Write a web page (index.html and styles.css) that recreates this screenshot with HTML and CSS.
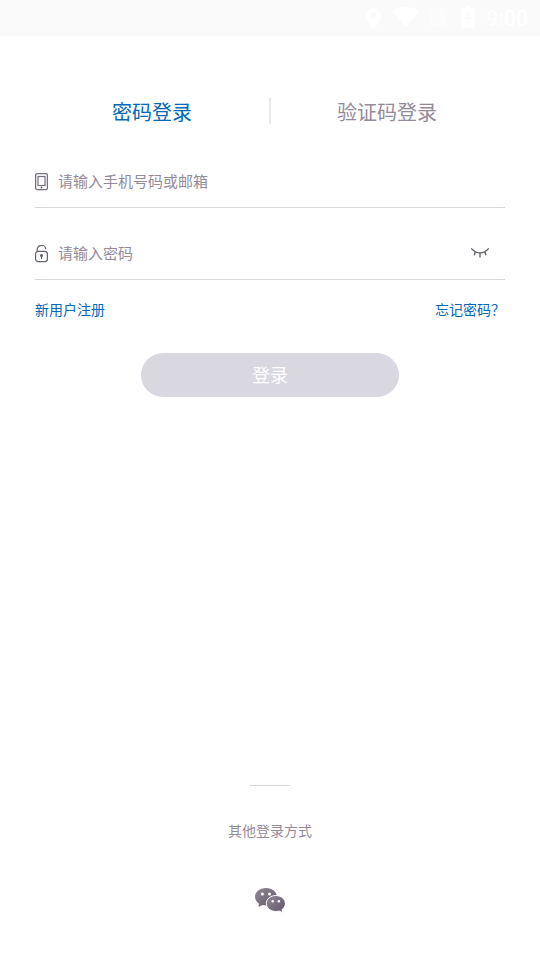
FILE: index.html
```
<!DOCTYPE html>
<html lang="zh-CN">
<head>
<meta charset="utf-8">
<title>登录</title>
<link rel="stylesheet" href="styles.css">
</head>
<body>
<header class="status">
  <svg width="118" height="36" viewBox="0 0 118 36" fill="#fff" aria-hidden="true">
    <path fill-rule="evenodd" d="M13.500 8a7.500 7.500 0 0 0-7.500 7.500C6 21 13.500 29 13.500 29S21 21 21 15.500A7.500 7.500 0 0 0 13.500 8zm0 4.700a2.700 2.700 0 1 1 0 5.400a2.700 2.700 0 0 1 0-5.400z"/>
    <path d="M32.500 11.200C40 5.700 51 5.700 58.500 11.200L45.500 27.500z"/>
    <path opacity=".4" d="M73 9h12v14.500L73 11.500zM71 13l13.500 13.500H71zM68 9.500l1-1 18 18-1 1z"/>
    <path fill-rule="evenodd" d="M105.500 6h5v2h4.500v20h-14V8h4.500zm3.500 5-5 8h3v6l5-8h-3z"/>
  </svg>
  <span class="clock">9:00</span>
</header>
<main class="page">
  <nav class="tabs">
    <a class="tab active">密码登录</a>
    <span class="divider"></span>
    <a class="tab code">验证码登录</a>
  </nav>
  <form class="form">
    <label class="field">
      <svg class="icon" width="13" height="18" viewBox="0 0 13 18" fill="none" stroke="#777080" aria-hidden="true">
        <rect x=".6" y=".6" width="11.800" height="16" rx="1.700" stroke-width="1.300"/>
        <rect x="3" y="3.500" width="7" height="9" stroke-width="1.200"/>
        <circle cx="6.500" cy="14.500" r=".9" fill="#5d5565" stroke="none"/>
      </svg>
      <span class="hint">请输入手机号码或邮箱</span>
    </label>
    <label class="field">
      <svg class="icon" width="13" height="18" viewBox="0 0 13 18" fill="none" stroke="#696171" stroke-width="1.200" aria-hidden="true">
        <path d="M2.200 6.500V5a4.300 4.300 0 0 1 8.600-.8"/>
        <rect x=".6" y="6.300" width="11.800" height="10.300" rx="2.600"/>
        <circle cx="6.500" cy="10.500" r="1.500" fill="#5d5565" stroke="none"/>
        <path d="M6.500 11v3"/>
      </svg>
      <span class="hint">请输入密码</span>
      <svg class="eye" width="20" height="12" viewBox="0 0 20 12" fill="none" stroke="#696171" stroke-width="1.400" aria-hidden="true">
        <path d="M1.200 1.400C6.500 7.400 13.500 7.400 18.800 1.400M5.200 4.500 4.300 8.300M10 5.800v4.700M14.800 4.500 15.900 8.300"/>
      </svg>
    </label>
    <div class="links"><a>新用户注册</a><a>忘记密码？</a></div>
    <button class="submit" type="button">登录</button>
  </form>
  <footer class="other">
    <span class="rule"></span>
    <span class="caption">其他登录方式</span>
    <svg width="32" height="26" viewBox="0 0 32 26" aria-label="微信">
      <defs><linearGradient id="g" x1="0" y1="0" x2="1" y2="1"><stop stop-color="#928b98"/><stop offset="1" stop-color="#5e5367"/></linearGradient></defs>
      <path fill="url(#g)" d="M12 1C5.900 1 1 4.900 1 9.800c0 2.800 1.500 5.200 4 6.700L4.500 20l4-2c1.100.3 2.300.5 3.500.5 6.100 0 11-3.900 11-8.700S18.100 1 12 1z"/>
      <path fill="url(#g)" stroke="#fff" stroke-width="1" d="M21.800 8.500c-5.300 0-9.500 3.600-9.500 8s4.200 8 9.500 8c1.200 0 2.300-.2 3.300-.5l3.500 1.700-.6-3.100c2-1.400 3.400-3.600 3.400-6.100 0-4.400-4.300-8-9.600-8z"/>
      <g fill="#fff"><circle cx="8.400" cy="7" r="1.500"/><circle cx="15.500" cy="7" r="1.500"/><circle cx="18.700" cy="14.200" r="1.200"/><circle cx="24.900" cy="14.200" r="1.200"/></g>
    </svg>
  </footer>
</main>
</body>
</html>
```
FILE: styles.css
```
* { box-sizing: border-box; }
body {
  margin: 0;
  height: 960px;
  display: flex;
  flex-direction: column;
  background: #fff;
  color: #948b99;
  font-family: "Noto Sans CJK SC", sans-serif;
}
.status {
  height: 36px;
  display: flex;
  justify-content: flex-end;
  align-items: center;
  padding-right: 12px;
  background: #fafafa;
  color: #fff;
}
.clock {
  width: 42px;
  margin-left: 8px;
  font: 500 21.500px/36px Roboto, sans-serif;
  padding-top: 2px;
}
.page {
  flex: 1;
  display: flex;
  flex-direction: column;
  padding: 62px 35px 0;
}
.tabs {
  display: grid;
  grid-template-columns: 234px 2px 234px;
  height: 26px;
  align-items: center;
}
.tab {
  padding-top: 2px;
  text-align: center;
  font-size: 20px;
  line-height: 24px;
}
.tab.code { padding-right: 2px; }
.tab.active, .links { color: #0068b7; }
.divider {
  width: 2px;
  height: 26px;
  background: #e9e8ed;
}
.form {
  display: flex;
  flex-direction: column;
  padding-top: 32px;
}
.field {
  height: 52px;
  margin-bottom: 20px;
  display: flex;
  align-items: center;
  border-bottom: 1px solid #d9d8e0;
  font-size: 15px;
  line-height: 22px;
}
.icon { margin-right: 10px; }
.hint { padding-bottom: 2px; }
.eye { margin: 0 15px 2px auto; }
.links {
  display: flex;
  justify-content: space-between;
  font-size: 14px;
  line-height: 18px;
}
.submit {
  width: 258px;
  height: 44px;
  align-self: center;
  margin-top: 35px;
  padding: 0 0 2px;
  border: 0;
  border-radius: 22px;
  background: #d9d8e0;
  color: #fff;
  font: 18px/42px "Noto Sans CJK SC", sans-serif;
}
.other {
  margin-top: auto;
  padding-bottom: 47px;
  display: flex;
  flex-direction: column;
  align-items: center;
}
.rule {
  width: 40px;
  height: 1px;
  background: #d9d8e0;
}
.caption {
  margin: 34px 0 47px;
  font-size: 14px;
  line-height: 20px;
}
```
